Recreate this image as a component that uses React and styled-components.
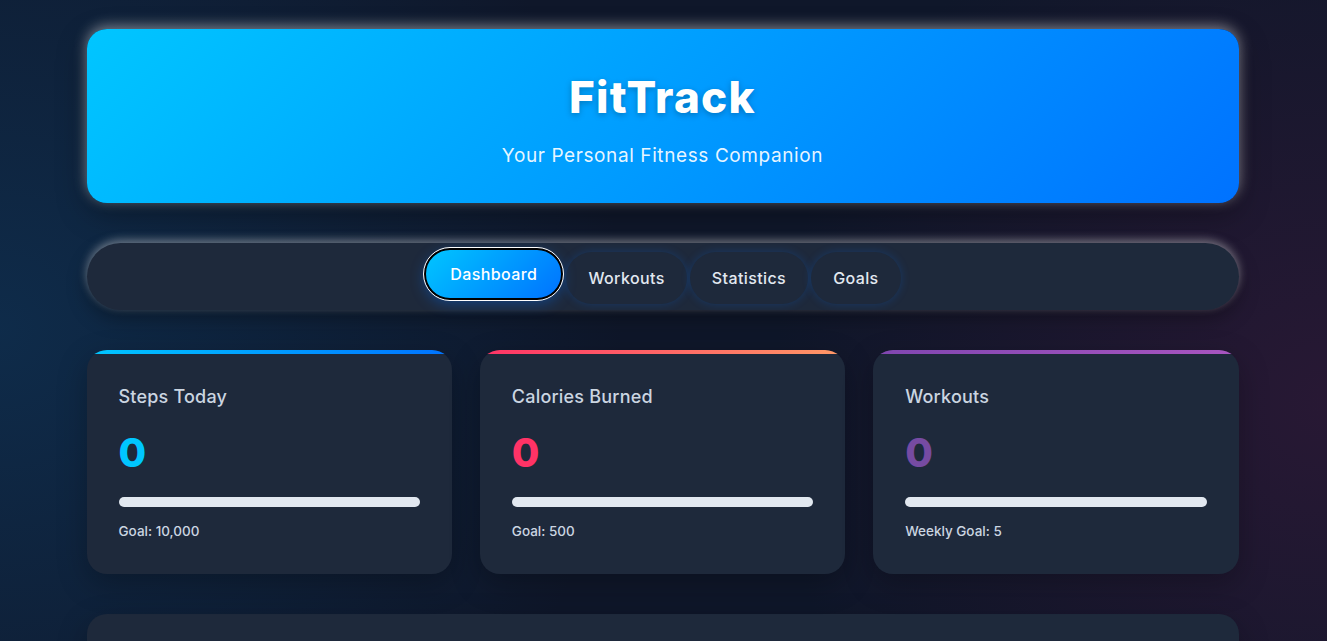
import React from 'react';
import styled, { createGlobalStyle } from 'styled-components';

const GlobalStyle = createGlobalStyle`
  * { box-sizing: border-box; }
  html, body {
    margin: 0;
    padding: 0;
  }
  body {
    font-family: Inter, 'Noto Sans', sans-serif;
    color: #e2e8f0;
    min-height: 100vh;
    background:
      radial-gradient(circle at 0% 45%, rgba(14, 60, 100, 0.55) 0%, rgba(14, 60, 100, 0) 45%),
      radial-gradient(circle at 100% 55%, rgba(60, 25, 60, 0.55) 0%, rgba(60, 25, 60, 0) 40%),
      #0f172a;
    overflow: hidden;
  }
`;

const Page = styled.div`
  width: 1152px;
  margin: 0 auto;
  padding: 29px 0 0;
  display: flex;
  flex-direction: column;
  transform: translateX(-1px);
`;

const Header = styled.header`
  height: 174px;
  border-radius: 20px;
  background: linear-gradient(135deg, #00c6ff 0%, #0072ff 100%);
  box-shadow: 0 -3px 14px rgba(255, 255, 255, 0.45), 0 10px 30px rgba(0, 0, 0, 0.35);
  display: flex;
  flex-direction: column;
  align-items: center;
  padding-top: 40px;
`;

const Title = styled.h1`
  margin: 0;
  font-size: 44px;
  font-weight: 800;
  color: #fff;
  letter-spacing: 1.3px;
  line-height: 56px;
  text-shadow: 0 2px 6px rgba(0, 0, 0, 0.25);
`;

const Subtitle = styled.p`
  margin: 19px 0 0;
  font-size: 19px;
  font-weight: 400;
  letter-spacing: 0.6px;
  color: rgba(255, 255, 255, 0.92);
  line-height: 24px;
`;

const Nav = styled.nav`
  margin-top: 40px;
  height: 67px;
  border-radius: 34px;
  background: #1e293b;
  box-shadow: 0 -3px 10px rgba(255, 255, 255, 0.4), 0 8px 20px rgba(0, 0, 0, 0.35);
  display: flex;
  justify-content: center;
  align-items: center;
  gap: 3px;
`;

const NavButton = styled.button`
  font-family: inherit;
  height: 52px;
  padding: 0 ${p => (p.$active ? '24px' : '22px')};
  border-radius: 26px;
  font-size: 16px;
  font-weight: 500;
  letter-spacing: 0.4px;
  color: ${p => (p.$active ? '#fff' : '#e2e8f0')};
  background: ${p => (p.$active ? 'linear-gradient(135deg, #00c6ff, #0072ff)' : '#1e293b')};
  border: ${p => (p.$active ? '2px solid #000' : 'none')};
  outline: ${p => (p.$active ? '1.5px solid #fff' : 'none')};
  box-shadow: ${p => (p.$active ? '0 4px 14px rgba(0, 114, 255, 0.35)' : '0 0 10px rgba(0, 114, 255, 0.22)')};
  transform: ${p => (p.$active ? 'translateY(-3px)' : 'none')};
  cursor: pointer;
  margin-top: ${p => (p.$active ? '0' : '2px')};
`;

const Grid = styled.div`
  margin-top: 40px;
  display: grid;
  grid-template-columns: repeat(3, 1fr);
  gap: 28px;
`;

const Card = styled.div`
  position: relative;
  height: 224px;
  border-radius: 20px;
  background: #1e293b;
  padding: 35px 32px 0;
  overflow: hidden;
  box-shadow: 0 10px 30px rgba(0, 0, 0, 0.25);

  &::before {
    content: '';
    position: absolute;
    top: 0;
    left: 0;
    right: 0;
    height: 4px;
    background: ${p => p.$bar};
  }
`;

const CardTitle = styled.h3`
  margin: 0;
  font-size: 18px;
  font-weight: 500;
  letter-spacing: 0.2px;
  color: #cbd5e1;
  line-height: 24px;
`;

const Value = styled.div`
  margin-top: 20px;
  font-size: 40px;
  font-weight: 800;
  line-height: 48px;
  color: ${p => p.$color};
`;

const Track = styled.div`
  margin-top: 20px;
  height: 10px;
  border-radius: 5px;
  background: #e2e8f0;
`;

const Fill = styled.div`
  height: 100%;
  border-radius: 5px;
  background: ${p => p.$color};
`;

const Note = styled.div`
  margin-top: 16px;
  font-size: 13.5px;
  font-weight: 500;
  color: #cbd5e1;
`;

const Panel = styled.div`
  margin-top: 40px;
  height: 120px;
  border-radius: 20px;
  background: #1e293b;
  box-shadow: 0 10px 30px rgba(0, 0, 0, 0.25);
`;

const stats = [
  { title: 'Steps Today', value: 0, goal: 'Goal: 10,000', color: '#00c6ff', bar: 'linear-gradient(90deg, #00c6ff, #0072ff)', pct: 0 },
  { title: 'Calories Burned', value: 0, goal: 'Goal: 500', color: '#ff3366', bar: 'linear-gradient(90deg, #ff3366, #ff9966)', pct: 0 },
  { title: 'Workouts', value: 0, goal: 'Weekly Goal: 5', color: '#764ba2', bar: 'linear-gradient(90deg, #8046b0, #a855c0)', pct: 0 },
];

const tabs = ['Dashboard', 'Workouts', 'Statistics', 'Goals'];

export default function App() {
  return (
    <>
      <GlobalStyle />
      <Page>
        <Header>
          <Title>FitTrack</Title>
          <Subtitle>Your Personal Fitness Companion</Subtitle>
        </Header>
        <Nav>
          {tabs.map((t, i) => (
            <NavButton key={t} $active={i === 0}>{t}</NavButton>
          ))}
        </Nav>
        <Grid>
          {stats.map(s => (
            <Card key={s.title} $bar={s.bar}>
              <CardTitle>{s.title}</CardTitle>
              <Value $color={s.color}>{s.value}</Value>
              <Track>
                <Fill $color={s.color} style={{ width: `${s.pct}%` }} />
              </Track>
              <Note>{s.goal}</Note>
            </Card>
          ))}
        </Grid>
        <Panel />
      </Page>
    </>
  );
}
